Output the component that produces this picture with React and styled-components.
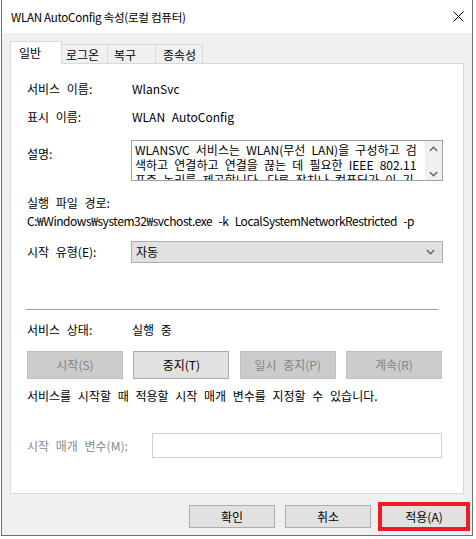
import React from "react";
import styled, { createGlobalStyle } from "styled-components";

const Global = createGlobalStyle`
  html, body { margin: 0; padding: 0; background: #ffffff; }
  * { box-sizing: border-box; }
  body { font-family: "Noto Sans CJK KR", "Noto Sans", sans-serif; font-size: 12px; color: #000; }
`;

const Window = styled.div`
  width: 472px;
  height: 536px;
  margin-left: 1px;
  border: 1px solid #707070;
  border-top: none;
  background: #f0f0f0;
  display: flex;
  flex-direction: column;
`;

const TitleBar = styled.div`
  height: 33px;
  background: #ffffff;
  display: flex;
  align-items: center;
  justify-content: space-between;
  padding: 0 8px 0 9px;
  flex-shrink: 0;
`;

const Title = styled.div`
  font-size: 11.6px;
  line-height: 16px;
  letter-spacing: -0.3px;
  color: #000;
`;

const Body = styled.div`
  flex: 1;
  display: flex;
  flex-direction: column;
  padding: 8px 8px 0 8px;
  word-spacing: 4px;
`;

const TabStrip = styled.div`
  display: flex;
  align-items: flex-end;
  height: 22px;
  position: relative;
  z-index: 1;
`;

const Tab = styled.div`
  width: ${(p) => p.$w}px;
  height: ${(p) => (p.$active ? 23 : 19)}px;
  margin-bottom: ${(p) => (p.$active ? -1 : 0)}px;
  margin-left: ${(p) => (p.$first ? 0 : -1)}px;
  background: ${(p) => (p.$active ? "#ffffff" : "#f0f0f0")};
  border: 1px solid #d9d9d9;
  border-bottom: none;
  display: flex;
  align-items: center;
  padding-left: ${(p) => p.$pl}px;
  font-size: 12px;
  line-height: 16px;
  padding-top: ${(p) => (p.$active ? 0 : 1)}px;
`;

const Panel = styled.div`
  height: 431px;
  background: #ffffff;
  border: 1px solid #d9d9d9;
  padding: 0 0 0 16px;
  display: flex;
  flex-direction: column;
  flex-shrink: 0;
`;

const Row = styled.div`
  display: flex;
  align-items: ${(p) => (p.$top ? "flex-start" : "center")};
  margin-top: ${(p) => p.$mt}px;
`;

const Label = styled.div`
  width: ${(p) => p.$w}px;
  flex-shrink: 0;
  line-height: 16px;
  white-space: nowrap;
  color: ${(p) => (p.$disabled ? "#8a8a8a" : "#000")};
  margin-top: ${(p) => p.$mt || 0}px;
`;

const Text = styled.div`
  line-height: 16px;
  margin-top: ${(p) => p.$mt || 0}px;
  letter-spacing: ${(p) => p.$ls || 0}px;
  white-space: nowrap;
`;

const DescBox = styled.div`
  width: 312px;
  height: 41px;
  border: 1px solid #a0a0a0;
  display: flex;
  overflow: hidden;
`;

const DescText = styled.div`
  flex: 1;
  padding: 1px 0 0 3px;
  line-height: 15px;
  word-spacing: 3.5px;
  overflow: hidden;
  white-space: nowrap;
`;

const ScrollBar = styled.div`
  width: 17px;
  background: #f0f0f0;
  display: flex;
  flex-direction: column;
  align-items: center;
  justify-content: space-between;
  padding: 5px 0 3px;
`;

const Select = styled.div`
  width: 312px;
  height: 22px;
  background: #e1e1e1;
  border: 1px solid #adadad;
  display: flex;
  align-items: center;
  justify-content: space-between;
  padding: 0 7px 0 4px;
  line-height: 16px;
`;

const Separator = styled.div`
  width: 412px;
  height: 1px;
  margin-left: -1px;
  margin-top: 46px;
  background: #a0a0a0;
`;

const ButtonRow = styled.div`
  width: 415px;
  display: flex;
  justify-content: space-between;
  margin-top: 13px;
`;

const Button = styled.div`
  width: ${(p) => p.$w}px;
  height: ${(p) => p.$h}px;
  background: ${(p) => (p.$disabled ? "#cccccc" : "#e1e1e1")};
  border: 1px solid ${(p) => (p.$disabled ? "#bfbfbf" : "#adadad")};
  color: ${(p) => (p.$disabled ? "#838383" : "#000")};
  display: flex;
  align-items: center;
  justify-content: center;
  line-height: 16px;
  font-size: 12px;
  white-space: nowrap;
  outline: ${(p) => (p.$highlight ? "4px solid #ed1c24" : "none")};
  outline-offset: -1px;
`;

const Input = styled.div`
  width: 290px;
  height: 25px;
  background: #fff;
  border: 1px solid #d0d0d0;
`;

const Footer = styled.div`
  display: flex;
  justify-content: flex-end;
  gap: 10px;
  padding-top: 11px;
  margin-right: -3px;
`;

const Chevron = ({ up }) => (
  <svg width={9} height={6} viewBox="0 0 9 6">
    <path
      d={up ? "M0.8 5 L4.5 1.2 L8.2 5" : "M0.8 1 L4.5 4.8 L8.2 1"}
      fill="none"
      stroke="#606060"
      strokeWidth="1.3"
    />
  </svg>
);

const CloseIcon = () => (
  <svg width="11" height="11" viewBox="0 0 11 11">
    <path d="M0.5 0.5 L10.5 10.5 M10.5 0.5 L0.5 10.5" stroke="#000" strokeWidth="1" />
  </svg>
);

const tabs = [
  { name: "일반", w: 52, pl: 8, active: true },
  { name: "로그온", w: 47, pl: 4 },
  { name: "복구", w: 49, pl: 6 },
  { name: "종속성", w: 48, pl: 7 },
];

const descLines = [
  "WLANSVC 서비스는 WLAN(무선 LAN)을 구성하고 검",
  "색하고 연결하고 연결을 끊는 데 필요한 IEEE 802.11",
  "표준 논리를 제공합니다. 다른 장치나 컴퓨터가 이 기",
];

export default function App() {
  return (
    <>
      <Global />
      <Window>
        <TitleBar>
          <Title>WLAN AutoConfig 속성(로컬 컴퓨터)</Title>
          <CloseIcon />
        </TitleBar>
        <Body>
          <TabStrip>
            {tabs.map((t, i) => (
              <Tab key={t.name} $w={t.w} $pl={t.pl} $active={t.active} $first={i === 0}>
                {t.name}
              </Tab>
            ))}
          </TabStrip>
          <Panel>
            <Row $mt={17}>
              <Label $w={105}>서비스 이름:</Label>
              <Text>WlanSvc</Text>
            </Row>
            <Row $mt={12}>
              <Label $w={105}>표시 이름:</Label>
              <Text>WLAN AutoConfig</Text>
            </Row>
            <Row $mt={15} $top>
              <Label $w={104} $mt={6}>설명:</Label>
              <DescBox>
                <DescText>
                  {descLines.map((l) => (
                    <div key={l}>{l}</div>
                  ))}
                </DescText>
                <ScrollBar>
                  <Chevron up />
                  <Chevron />
                </ScrollBar>
              </DescBox>
            </Row>
            <Text $mt={14}>실행 파일 경로:</Text>
            <Text $mt={2} $ls={-0.45}>C:₩Windows₩system32₩svchost.exe -k LocalSystemNetworkRestricted -p</Text>
            <Row $mt={12}>
              <Label $w={104}>시작 유형(E):</Label>
              <Select>
                <span>자동</span>
                <Chevron />
              </Select>
            </Row>
            <Separator />
            <Row $mt={12}>
              <Label $w={105}>서비스 상태:</Label>
              <Text>실행 중</Text>
            </Row>
            <ButtonRow>
              <Button $w={96} $h={28} $disabled>시작(S)</Button>
              <Button $w={96} $h={28}>중지(T)</Button>
              <Button $w={96} $h={28} $disabled>일시 중지(P)</Button>
              <Button $w={96} $h={28} $disabled>계속(R)</Button>
            </ButtonRow>
            <Text $mt={9}>서비스를 시작할 때 적용할 시작 매개 변수를 지정할 수 있습니다.</Text>
            <Row $mt={29}>
              <Label $w={125} $disabled>시작 매개 변수(M):</Label>
              <Input />
            </Row>
          </Panel>
          <Footer>
            <Button $w={86} $h={23}>확인</Button>
            <Button $w={86} $h={23}>취소</Button>
            <Button $w={86} $h={23} $highlight>적용(A)</Button>
          </Footer>
        </Body>
      </Window>
    </>
  );
}
